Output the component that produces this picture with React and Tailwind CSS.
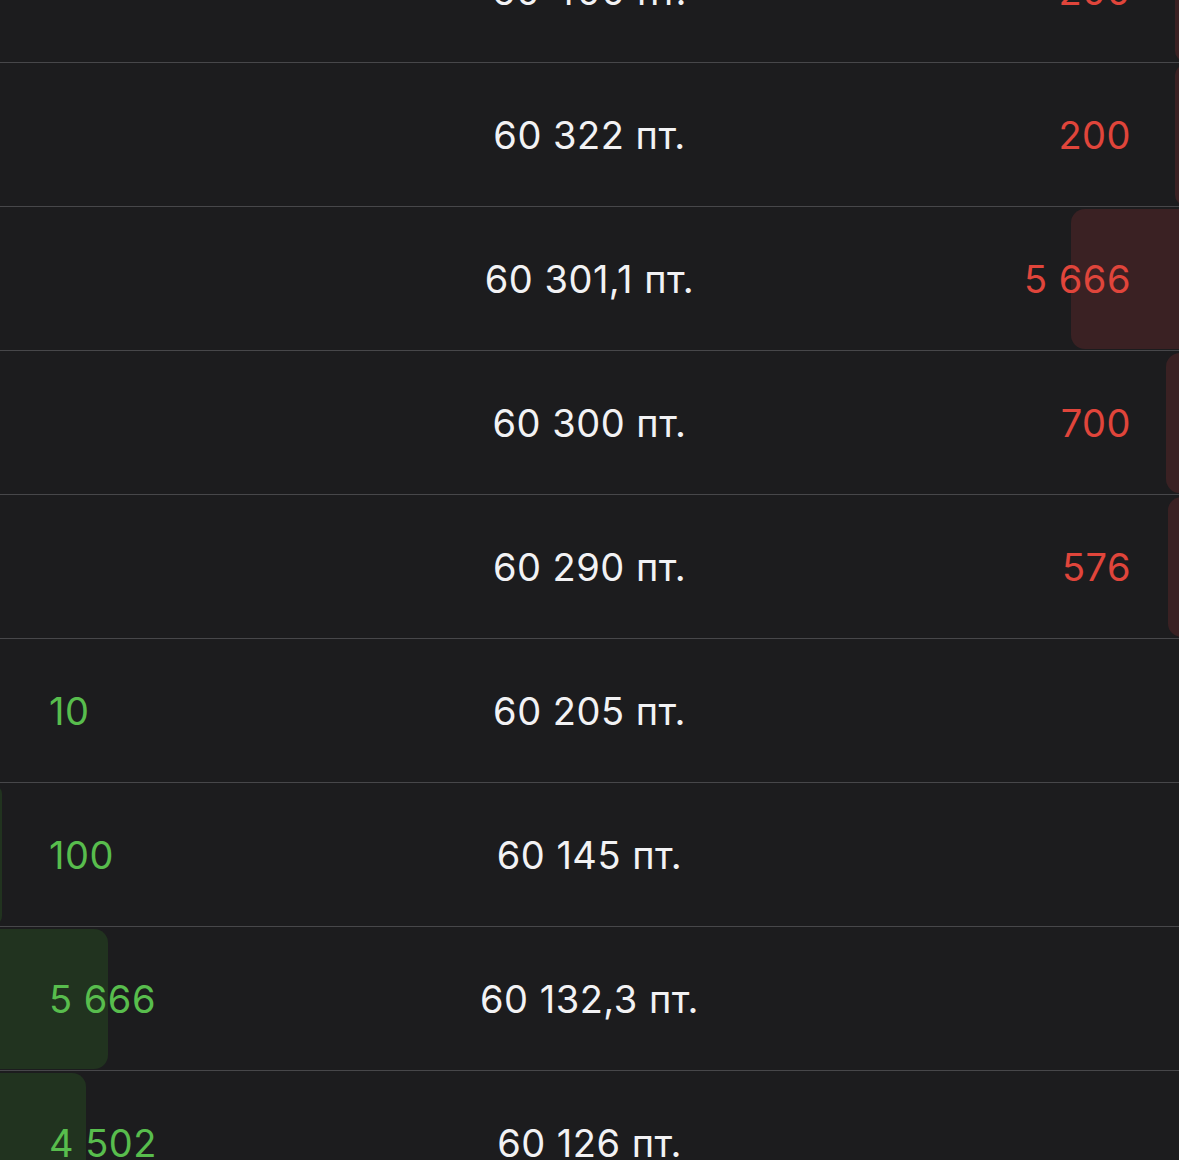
const rows = [
  { price: '60 400 пт.', ask: '200', askBar: 4 },
  { price: '60 322 пт.', ask: '200', askBar: 4 },
  { price: '60 301,1 пт.', ask: '5 666', askBar: 108 },
  { price: '60 300 пт.', ask: '700', askBar: 13 },
  { price: '60 290 пт.', ask: '576', askBar: 11 },
  { price: '60 205 пт.', bid: '10', bidBar: 0 },
  { price: '60 145 пт.', bid: '100', bidBar: 2 },
  { price: '60 132,3 пт.', bid: '5 666', bidBar: 108 },
  { price: '60 126 пт.', bid: '4 502', bidBar: 86 },
];

function Row({ row }) {
  return (
    <div className="relative h-[144px] border-b border-[#47474a]">
      {row.askBar > 0 && (
        <div
          className="absolute top-[2px] bottom-[1px] right-[-16px] rounded-[14px] bg-[#3a2123]"
          style={{ width: row.askBar + 16 }}
        />
      )}
      {row.bidBar > 0 && (
        <div
          className="absolute top-[2px] bottom-[1px] left-[-16px] rounded-[14px] bg-[#21331f]"
          style={{ width: row.bidBar + 16 }}
        />
      )}
      <div className="relative grid h-full grid-cols-3 items-center pt-[2px]">
        <div className="pl-[49px] text-[#58bd4d]">{row.bid}</div>
        <div className="text-center text-[#f2f2f4]">{row.price}</div>
        <div className="pr-[48px] text-right text-[#e0453b]">{row.ask}</div>
      </div>
    </div>
  );
}

export default function App() {
  return (
    <div
      className="h-[1160px] overflow-hidden bg-[#1c1c1e] text-[38px] tracking-[0.5px]"
      style={{ fontFamily: 'Inter, "Liberation Sans", sans-serif' }}
    >
      <div className="-mt-[81px]">
        {rows.map((r) => (
          <Row key={r.price} row={r} />
        ))}
      </div>
    </div>
  );
}
